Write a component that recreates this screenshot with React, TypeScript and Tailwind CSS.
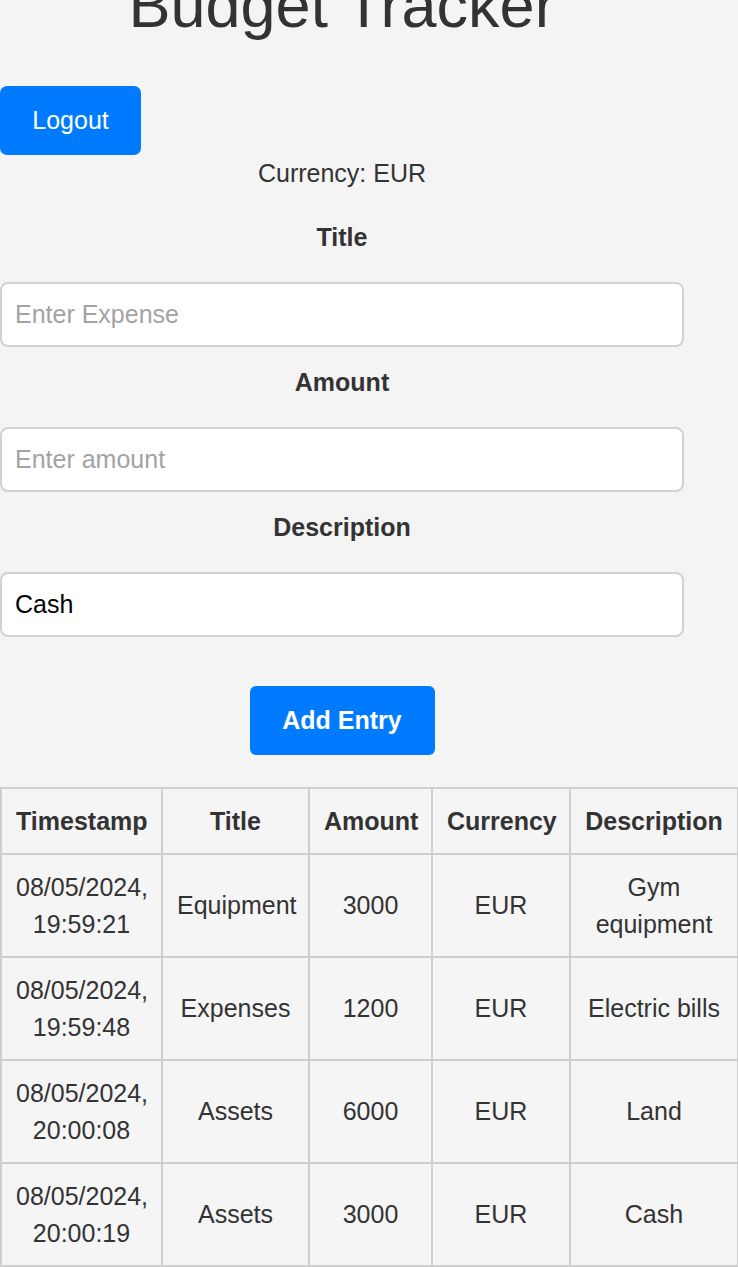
import React from 'react'

const entries = [
  { date: '08/05/2024,', time: '19:59:21', title: 'Equipment', amount: '3000', currency: 'EUR', description: 'Gym equipment' },
  { date: '08/05/2024,', time: '19:59:48', title: 'Expenses', amount: '1200', currency: 'EUR', description: 'Electric bills' },
  { date: '08/05/2024,', time: '20:00:08', title: 'Assets', amount: '6000', currency: 'EUR', description: 'Land' },
  { date: '08/05/2024,', time: '20:00:19', title: 'Assets', amount: '3000', currency: 'EUR', description: 'Cash' },
]

const cell = 'border-2 border-[#cfcfcf] px-[14px] py-[13.5px] text-center align-middle leading-[37px]'

export default function App() {
  return (
    <div className="min-h-[1267px] bg-[#f4f4f4] text-[#333] font-['Liberation_Sans',Arial,sans-serif] text-[25px] overflow-hidden">
      <div className="flex flex-col w-[684px]">
        {/* Header */}
        <h1 className="-mt-[31px] text-center text-[63px] leading-[72px] font-normal">Budget Tracker</h1>

        <div className="mt-[45px]">
          <button className="w-[141px] h-[69px] rounded-[7px] bg-[#007bff] text-white text-[25px]">Logout</button>
        </div>
        <p className="text-center leading-[37px]">Currency: EUR</p>

        {/* Form */}
        <label className="mt-[27px] text-center font-bold leading-[37px]">Title</label>
        <input
          className="mt-[26px] h-[65px] w-[684px] rounded-[8px] border-2 border-[#d2d2d2] bg-white px-[13px] text-[25px] text-black placeholder:text-[#a3a3a3] outline-none"
          placeholder="Enter Expense"
        />
        <label className="mt-[17px] text-center font-bold leading-[37px]">Amount</label>
        <input
          className="mt-[26px] h-[65px] w-[684px] rounded-[8px] border-2 border-[#d2d2d2] bg-white px-[13px] text-[25px] text-black placeholder:text-[#a3a3a3] outline-none"
          placeholder="Enter amount"
        />
        <label className="mt-[17px] text-center font-bold leading-[37px]">Description</label>
        <input
          className="mt-[26px] h-[65px] w-[684px] rounded-[8px] border-2 border-[#d2d2d2] bg-white px-[13px] text-[25px] text-black placeholder:text-[#a3a3a3] outline-none"
          defaultValue="Cash"
        />

        <div className="mt-[49px] flex justify-center">
          <button className="w-[185px] h-[69px] rounded-[6px] bg-[#007bff] text-white font-bold text-[25px]">Add Entry</button>
        </div>
      </div>

      {/* Entries */}
      <table className="mt-[32px] w-[737px] table-fixed border-collapse bg-[#f5f5f5]">
        <colgroup>
          <col className="w-[161px]" />
          <col className="w-[147px]" />
          <col className="w-[123px]" />
          <col className="w-[138px]" />
          <col className="w-[168px]" />
        </colgroup>
        <thead>
          <tr className="font-bold">
            <th className={cell}>Timestamp</th>
            <th className={cell}>Title</th>
            <th className={cell}>Amount</th>
            <th className={cell}>Currency</th>
            <th className={cell}>Description</th>
          </tr>
        </thead>
        <tbody>
          {entries.map((e, i) => (
            <tr key={i}>
              <td className={cell}>
                {e.date}
                <br />
                {e.time}
              </td>
              <td className={cell}>{e.title}</td>
              <td className={cell}>{e.amount}</td>
              <td className={cell}>{e.currency}</td>
              <td className={cell}>{e.description}</td>
            </tr>
          ))}
        </tbody>
      </table>
    </div>
  )
}
